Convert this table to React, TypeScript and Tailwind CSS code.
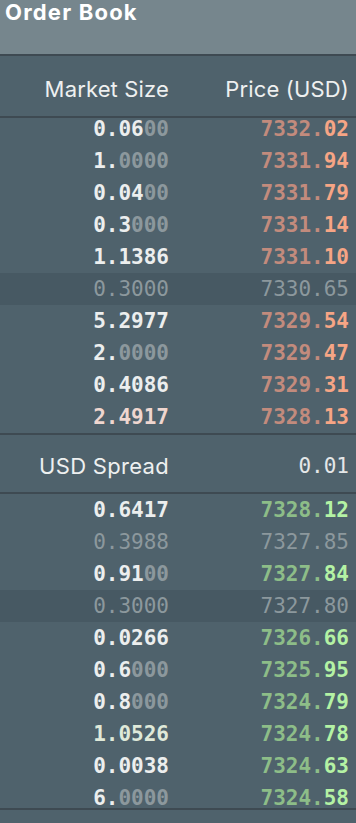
import React from 'react'

type Row = {
  size: string
  sizeDim?: string
  price: string
  priceHi?: string
  muted?: boolean
  highlight?: boolean
  tint?: string
}

const asks: Row[] = [
  { size: '0.06', sizeDim: '00', price: '7332.', priceHi: '02' },
  { size: '1.', sizeDim: '0000', price: '7331.', priceHi: '94' },
  { size: '0.04', sizeDim: '00', price: '7331.', priceHi: '79' },
  { size: '0.3', sizeDim: '000', price: '7331.', priceHi: '14' },
  { size: '1.1386', price: '7331.', priceHi: '10' },
  { size: '0.3000', price: '7330.65', muted: true, highlight: true },
  { size: '5.2977', price: '7329.', priceHi: '54' },
  { size: '2.', sizeDim: '0000', price: '7329.', priceHi: '47' },
  { size: '0.4086', price: '7329.', priceHi: '31' },
  { size: '2.4917', price: '7328.', priceHi: '13', tint: 'text-[#efd6cf]' },
]

const bids: Row[] = [
  { size: '0.6417', price: '7328.', priceHi: '12' },
  { size: '0.3988', price: '7327.85', muted: true },
  { size: '0.91', sizeDim: '00', price: '7327.', priceHi: '84' },
  { size: '0.3000', price: '7327.80', muted: true, highlight: true },
  { size: '0.0266', price: '7326.', priceHi: '66' },
  { size: '0.6', sizeDim: '000', price: '7325.', priceHi: '95' },
  { size: '0.8', sizeDim: '000', price: '7324.', priceHi: '79' },
  { size: '1.0526', price: '7324.', priceHi: '78', tint: 'text-[#dfe9d9]' },
  { size: '0.0038', price: '7324.', priceHi: '63' },
  { size: '6.', sizeDim: '0000', price: '7324.', priceHi: '58' },
]

const mono = "font-['DejaVu_Sans_Mono','Liberation_Mono',monospace]"

function BookRow({ row, side }: { row: Row; side: 'ask' | 'bid' }) {
  const base = side === 'ask' ? 'text-[#c28b7d]' : 'text-[#8dbd88]'
  const hi = side === 'ask' ? 'text-[#f6a585]' : 'text-[#b4f2a4]'
  return (
    <div
      className={`grid grid-cols-2 h-[32px] shrink-0 items-center text-[21px] leading-none ${mono} ${
        row.highlight ? 'bg-[#475963]' : ''
      }`}
    >
      {row.muted ? (
        <>
          <div className="text-right pr-[9px] text-[#8c989d]">{row.size}</div>
          <div className="text-right pr-[7px] text-[#8c989d]">{row.price}</div>
        </>
      ) : (
        <>
          <div className="text-right pr-[9px] font-bold">
            <span className={row.tint ?? 'text-[#eceeee]'}>{row.size}</span>
            {row.sizeDim && <span className="text-[#8c989d]">{row.sizeDim}</span>}
          </div>
          <div className="text-right pr-[7px] font-bold">
            <span className={base}>{row.price}</span>
            <span className={hi}>{row.priceHi}</span>
          </div>
        </>
      )}
    </div>
  )
}

export default function App() {
  return (
    <div className="w-[356px] h-[823px] bg-[#4f626c] overflow-hidden font-['Inter','Roboto',sans-serif]">
      <div className="h-[54px] bg-[#76868d] px-[5px]">
        <h1 className="text-[22px] leading-[24px] tracking-[1.2px] font-bold text-white">Order Book</h1>
      </div>
      <div className="h-[2px] bg-[#3e4a52]" />

      <div className="grid grid-cols-2 h-[60px] items-center pt-[6px] text-[22px] tracking-[0.15px] text-[#eef0f0]">
        <div className="text-right pr-[9px]">Market Size</div>
        <div className="text-right pr-[7px]">Price (USD)</div>
      </div>
      <div className="h-[2px] bg-[#3e4a52]" />

      <div className="h-[315px] overflow-hidden flex flex-col justify-end">
        {asks.map((r, i) => (
          <BookRow key={i} row={r} side="ask" />
        ))}
      </div>
      <div className="h-[2px] bg-[#3e4a52]" />

      <div className="grid grid-cols-2 h-[57px] items-center pt-[6px] text-[22px] tracking-[0.3px] text-[#eef0f0]">
        <div className="text-right pr-[9px]">USD Spread</div>
        <div className={`text-right pr-[7px] tracking-normal text-[21px] ${mono} text-[#e4e7e8]`}>0.01</div>
      </div>
      <div className="h-[2px] bg-[#3e4a52]" />

      <div className="h-[314px] overflow-hidden flex flex-col">
        {bids.map((r, i) => (
          <BookRow key={i} row={r} side="bid" />
        ))}
      </div>
      <div className="h-[2px] bg-[#3e4a52]" />
    </div>
  )
}
